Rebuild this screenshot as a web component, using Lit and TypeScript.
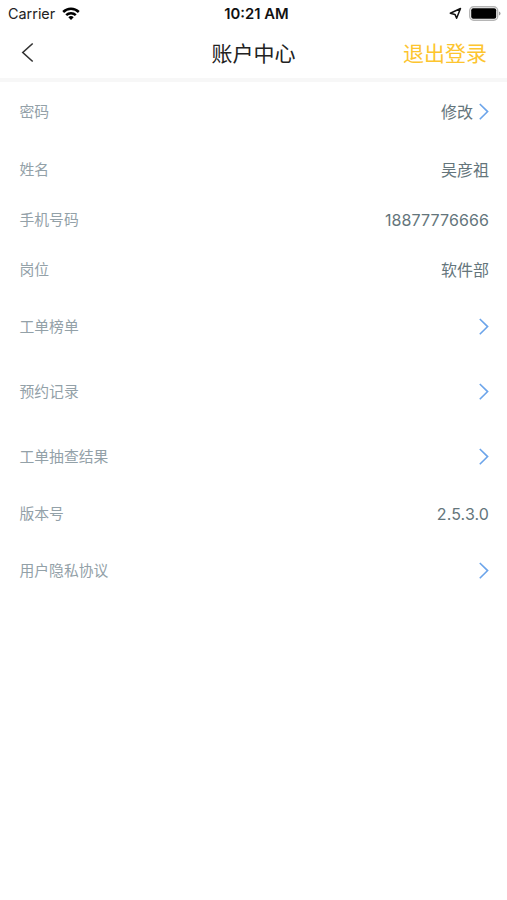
import { LitElement, html, css } from "lit";
import { customElement } from "lit/decorators.js";

interface Row { label: string; value?: string; link?: boolean; size: string; }

const rows: Row[] = [
  { label: "密码", value: "修改", link: true, size: "first" },
  { label: "姓名", value: "吴彦祖", size: "short" },
  { label: "手机号码", value: "18877776666", size: "short" },
  { label: "岗位", value: "软件部", size: "short" },
  { label: "工单榜单", link: true, size: "tall" },
  { label: "预约记录", link: true, size: "tall" },
  { label: "工单抽查结果", link: true, size: "tall" },
  { label: "版本号", value: "2.5.3.0", size: "short" },
  { label: "用户隐私协议", link: true, size: "tall" },
];

@customElement("app-root")
export class AppRoot extends LitElement {
  static styles = css`
    :host { display: block; height: 900px; overflow: hidden; background: #fff; font-family: Inter, "Noto Sans CJK SC", sans-serif; }
    .status { height: 27px; display: grid; grid-template-columns: 1fr auto 1fr; align-items: center; padding: 0 6px 0 8px; box-sizing: border-box; font-size: 14.4px; color: #222; }
    .side { display: flex; align-items: center; gap: 7px; }
    .right { justify-content: flex-end; }
    .time { font-weight: 600; font-size: 14.8px; color: #111; padding-left: 4px; }
    .nav { height: 51px; display: grid; grid-template-columns: 1fr auto 1fr; align-items: center; padding: 0 20px; border-bottom: 4px solid #f7f7f7; }
    .title, .logout { font-size: 21px; line-height: 30px; padding-top: 2px; }
    .title { color: #222; }
    .logout { color: #fdc52f; text-align: right; }
    .row { display: flex; align-items: center; justify-content: space-between; padding: 0 18px 0 19.5px; }
    .first { height: 59px; margin-bottom: 3.8px; }
    .tall { height: 64.6px; }
    .short { height: 50.1px; }
    .label { font-size: 14.8px; line-height: 22px; color: #93a1a8; }
    .value { font-size: 16px; line-height: 24px; color: #64757b; display: flex; align-items: center; gap: 6px; }
    .number { letter-spacing: .1px; }
    svg { display: block; }
  `;
  render() {
    return html`
      <div class="status">
        <div class="side"><span>Carrier</span>
          <svg width="18" height="14" viewBox="0 0 18 14"><g fill="none" stroke="#000" stroke-width="2.5"><path d="M1.2 5a11 11 0 0 1 15.6 0"/><path d="M4.2 8.2a6.8 6.8 0 0 1 9.6 0"/></g><path d="M6.3 10.3a3.8 3.8 0 0 1 5.4 0L9 13z"/></svg>
        </div>
        <span class="time">10:21 AM</span>
        <div class="side right">
          <svg width="13" height="13" viewBox="0 0 13 13"><path d="M1.3 6.2L11.5 1.5 7.6 11.2 6 7.4z" fill="none" stroke="#111" stroke-width="1.5" stroke-linejoin="round"/></svg>
          <svg width="32" height="15" viewBox="0 0 32 15"><rect x=".7" y=".7" width="28" height="13.6" rx="4" fill="none" stroke="#b5b5b5" stroke-width="1.4"/><rect x="2.2" y="2.2" width="25" height="10.6" rx="2"/><path d="M30 5.5v4q1.5-.5 1.5-2T30 5.5" fill="#999"/></svg>
        </div>
      </div>
      <div class="nav">
        <svg width="16" height="22" viewBox="0 0 16 22"><path d="M12.7 1.5L2.8 10.5l9.9 9" fill="none" stroke="#333" stroke-width="1.6"/></svg>
        <span class="title">账户中心</span><span class="logout">退出登录</span>
      </div>
      ${rows.map(r => html`<div class="row ${r.size}"><span class="label">${r.label}</span>
        <span class="value">${r.value ? html`<span class=${/^[\d.]+$/.test(r.value) ? "number" : "text"}>${r.value}</span>` : ""}${r.link ? html`<svg width="10" height="18" viewBox="0 0 10 18"><path d="M.8 1L8.6 8.6l-7.8 7.6" fill="none" stroke="#6ba4ea" stroke-width="1.6"/></svg>` : ""}</span></div>`)}
    `;
  }
}
